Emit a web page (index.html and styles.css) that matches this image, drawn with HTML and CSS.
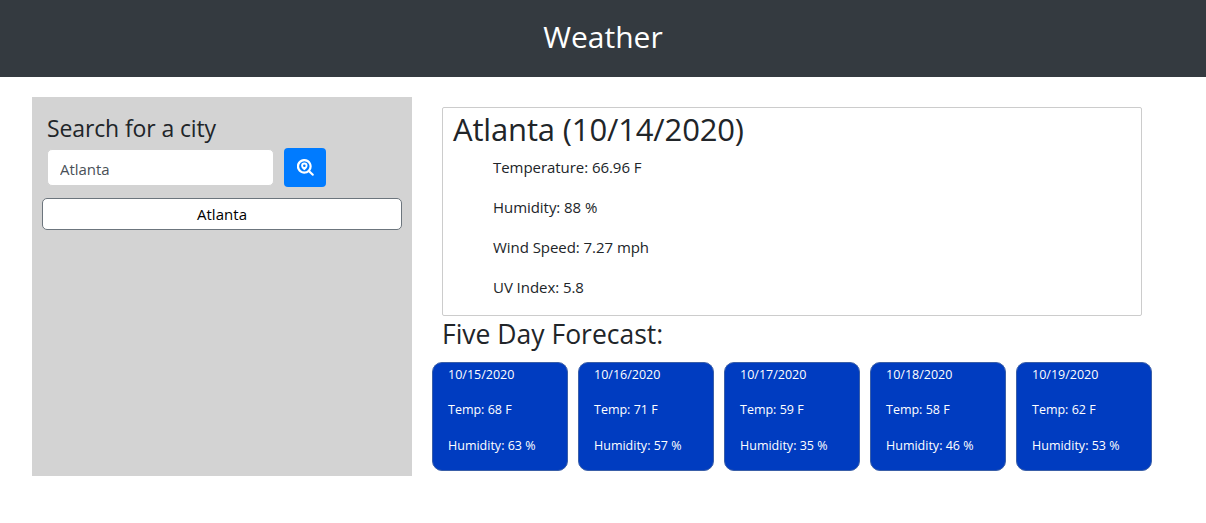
FILE: index.html
```html
<!DOCTYPE html>
<html lang="en">
<head>
  <meta charset="UTF-8" />
  <title>Weather</title>
  <link rel="stylesheet" href="styles.css">
</head>
<body>
  <header class="top-bar">
    <h1>Weather</h1>
  </header>

  <main class="page">
    <aside class="sidebar">
      <h2 class="search-title">Search for a city</h2>
      <form class="search-form">
        <input class="search-input" type="text" value="Atlanta">
        <button class="search-btn" type="button" aria-label="Search">
          <svg viewBox="0 0 16 16" width="17" height="17">
            <path fill="#fff" fill-rule="evenodd" d="M6.9 0a6.9 6.9 0 0 1 5.5 11l3.2 3.2a1 1 0 0 1-1.4 1.4L10.9 12.4A6.9 6.9 0 1 1 6.9 0zm0 2a4.9 4.9 0 1 0 0 9.8 4.9 4.9 0 0 0 0-9.8zm0 1.3a3 3 0 0 1 3 3c0 1.9-2 3.6-3 4.4-1-.8-3-2.5-3-4.4a3 3 0 0 1 3-3zm0 1.9a1.2 1.2 0 1 0 0 2.4 1.2 1.2 0 0 0 0-2.4z"/>
          </svg>
        </button>
      </form>
      <button class="city-btn" type="button">Atlanta</button>
    </aside>

    <section class="content">
      <div class="current">
        <h2 class="current-title">Atlanta (10/14/2020)</h2>
        <p>Temperature: 66.96 F</p>
        <p>Humidity: 88 %</p>
        <p>Wind Speed: 7.27 mph</p>
        <p>UV Index: 5.8</p>
      </div>
      <h3 class="forecast-title">Five Day Forecast:</h3>
      <div class="forecast">
        <div class="day">
          <p>10/15/2020</p>
          <p>Temp: 68 F</p>
          <p>Humidity: 63 %</p>
        </div>
        <div class="day">
          <p>10/16/2020</p>
          <p>Temp: 71 F</p>
          <p>Humidity: 57 %</p>
        </div>
        <div class="day">
          <p>10/17/2020</p>
          <p>Temp: 59 F</p>
          <p>Humidity: 35 %</p>
        </div>
        <div class="day">
          <p>10/18/2020</p>
          <p>Temp: 58 F</p>
          <p>Humidity: 46 %</p>
        </div>
        <div class="day">
          <p>10/19/2020</p>
          <p>Temp: 62 F</p>
          <p>Humidity: 53 %</p>
        </div>
      </div>
    </section>
  </main>
</body>
</html>
```

FILE: styles.css
```css
* { box-sizing: border-box; }

body {
  margin: 0;
  font-family: "Open Sans", "Noto Sans", sans-serif;
  font-size: 15px;
  letter-spacing: -0.05px;
  color: #212529;
  background-color: #fff;
}

h1, h2, h3, p { margin: 0; font-weight: 400; }

.top-bar {
  height: 77px;
  padding-bottom: 3px;
  background-color: #343a40;
  color: #fff;
  display: flex;
  align-items: center;
  justify-content: center;
}
.top-bar h1 { font-size: 30px; line-height: 1.2; letter-spacing: 0; }

.page {
  display: flex;
  align-items: flex-start;
  padding: 20px 0 0 32px;
}

.sidebar {
  flex: none;
  width: 380px;
  height: 379px;
  padding: 17px 10px 0;
  background-color: #d3d3d3;
}
.search-title {
  font-size: 23px;
  line-height: 28px;
  margin-left: 5px;
  letter-spacing: -0.12px;
}
.search-form {
  display: flex;
  align-items: flex-start;
  margin: 6px 0 11px 5px;
}
.search-input {
  width: 227px;
  height: 37px;
  margin-top: 1px;
  padding: 2px 12px 0;
  border: 1px solid #d3d3d3;
  border-radius: 5px;
  background: #fff;
  font: inherit;
  letter-spacing: inherit;
  color: #495057;
}
.search-btn {
  width: 42px;
  height: 39px;
  margin-left: 10px;
  padding: 0;
  border: none;
  border-radius: 4px;
  background-color: #007bff;
  display: flex;
  align-items: center;
  justify-content: center;
}
.city-btn {
  display: block;
  width: 360px;
  height: 32px;
  padding: 0;
  border: 1px solid #6c757d;
  border-radius: 5px;
  background: #fff;
  font: inherit;
  letter-spacing: 0.05px;
  color: #000;
}

.content {
  flex: none;
  width: 720px;
  margin-left: 20px;
  padding-top: 10px;
}
.current {
  width: 700px;
  height: 209px;
  margin-left: 10px;
  padding: 2px 10px 0;
  border: 1px solid #ccc;
  border-radius: 2px;
}
.current-title {
  font-size: 31px;
  line-height: 38px;
  margin-bottom: 7px;
  letter-spacing: -0.15px;
}
.current p {
  padding-left: 40px;
  line-height: 24px;
  margin-bottom: 16px;
}
.forecast-title {
  font-size: 26.5px;
  line-height: 34px;
  margin: 1px 0 11px 10px;
  letter-spacing: 0;
}
.forecast {
  display: flex;
  gap: 10px;
}
.day {
  width: 136px;
  height: 109px;
  padding: 3px 15px 0;
  border: 1px solid #3a5fa8;
  border-radius: 10px;
  background-color: #003cc0;
  color: #fff;
  font-size: 12.5px;
  letter-spacing: 0;
}
.day p {
  line-height: 18px;
  margin-bottom: 17px;
}
.day p:last-child { margin-top: 18px; }
```
